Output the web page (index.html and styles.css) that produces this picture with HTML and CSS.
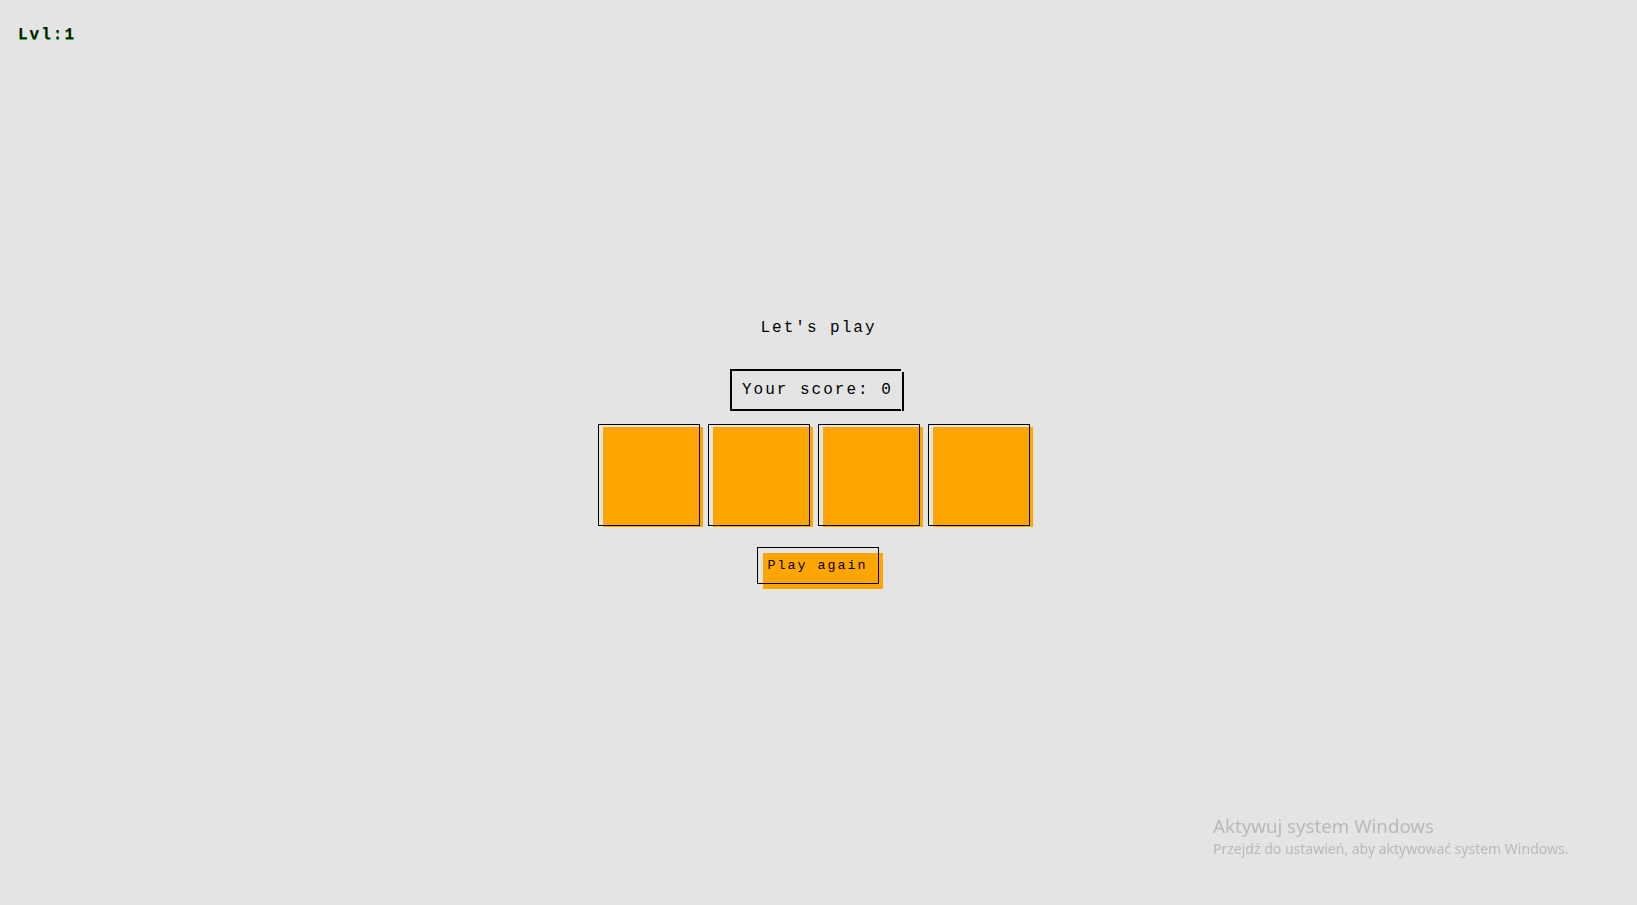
FILE: index.html
```html
<!DOCTYPE html>
<html lang="pl">
<head>
<meta charset="utf-8">
<title>Game</title>
<link rel="stylesheet" href="styles.css">
</head>
<body>
<div class="lvl">Lvl:1</div>
<main class="game">
  <h1 class="title">Let's play</h1>
  <div class="score">Your score: 0</div>
  <div class="tiles">
    <div class="tile"></div>
    <div class="tile"></div>
    <div class="tile"></div>
    <div class="tile"></div>
  </div>
  <button class="again"><span class="face">Play again</span></button>
</main>
<div class="watermark">
  <div class="wm-title">Aktywuj system Windows</div>
  <div class="wm-sub">Przejdź do ustawień, aby aktywować system Windows.</div>
</div>
</body>
</html>
```
FILE: styles.css
```css
html, body {
  margin: 0;
  padding: 0;
}
body {
  background: #e4e4e4;
  font-family: "Liberation Mono", "Courier New", monospace;
  color: #000;
  min-height: 905px;
}
.lvl {
  padding: 26px 0 0 18px;
  font-size: 16px;
  line-height: 18px;
  font-weight: bold;
  letter-spacing: 2px;
  color: #0c1a0c;
  text-shadow: 0 1px 0 #22c322;
}
.game {
  display: flex;
  flex-direction: column;
  align-items: center;
  padding-top: 274px;
}
.title {
  margin: 1px 0 0 0;
  font-size: 16px;
  line-height: 18px;
  font-weight: normal;
  letter-spacing: 2px;
}
.score {
  position: relative;
  margin: 32px 6px 0 0;
  width: 159px;
  padding: 10px 0 9px 10px;
  border: 2px solid #000;
  border-right: none;
  font-size: 16px;
  line-height: 19px;
  letter-spacing: 2px;
  white-space: nowrap;
}
.score::after {
  content: "";
  position: absolute;
  right: -3px;
  top: 1px;
  bottom: -2px;
  width: 2px;
  background: #000;
}
.tiles {
  display: flex;
  gap: 8px;
  margin: 13px 9px 0 0;
}
.tile {
  position: relative;
  width: 100px;
  height: 100px;
  border: 1px solid #000;
}
.tile::before {
  content: "";
  position: absolute;
  left: 4px;
  top: 2px;
  width: 100px;
  height: 100px;
  background: #ffa500;
  z-index: -1;
}
.again {
  position: relative;
  margin: 21px 2px 0 0;
  padding: 0;
  width: 122px;
  height: 37px;
  border: 1px solid #000;
  background: transparent;
  font-family: "Liberation Mono", "Courier New", monospace;
  font-size: 13.33px;
  color: #000;
}
.face {
  position: absolute;
  left: 5px;
  top: 5px;
  width: 115px;
  height: 31px;
  padding: 5px 0 0 5px;
  background: #ffa500;
  z-index: -1;
  text-align: left;
  line-height: 15px;
  letter-spacing: 2px;
  white-space: nowrap;
}
.watermark {
  position: fixed;
  left: 1213px;
  top: 814px;
  font-family: "Noto Sans", "Open Sans", sans-serif;
  color: #b9b9b9;
}
.wm-title {
  font-size: 18.7px;
  line-height: 24px;
}
.wm-sub {
  font-size: 14px;
  line-height: 21px;
}
```
